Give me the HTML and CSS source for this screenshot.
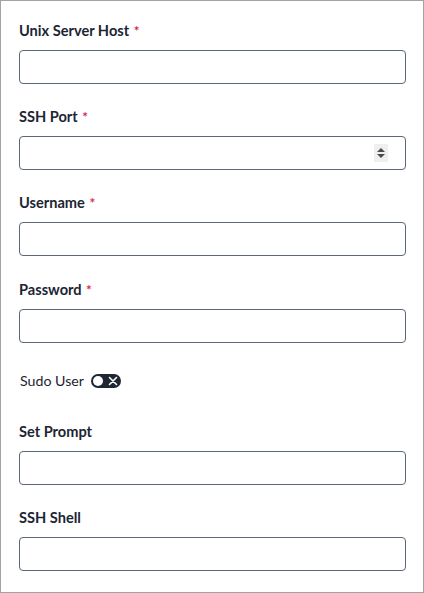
FILE: index.html
```html
<!DOCTYPE html>
<html>
<head>
<meta charset="utf-8">
<link rel="stylesheet" href="styles.css">
</head>
<body>
<div class="frame">
  <form class="form">
    <div class="field">
      <label class="label">Unix Server Host <span class="req">*</span></label>
      <input class="input" type="text">
    </div>
    <div class="field">
      <label class="label">SSH Port <span class="req">*</span></label>
      <div class="input number">
        <span class="spin">
          <svg width="10" height="14" viewBox="0 0 10 14"><path d="M5 2 L9 6 H1 Z" fill="#4b4b4b"/><path d="M1 8 H9 L5 12 Z" fill="#4b4b4b"/></svg>
        </span>
      </div>
    </div>
    <div class="field field-wide">
      <label class="label">Username <span class="req">*</span></label>
      <input class="input" type="text">
    </div>
    <div class="field">
      <label class="label">Password <span class="req">*</span></label>
      <input class="input" type="password">
    </div>
    <div class="toggle-row">
      <span class="toggle-label">Sudo User</span>
      <span class="toggle">
        <span class="knob"></span>
        <svg class="x" width="10" height="10" viewBox="0 0 10 10"><path d="M1.5 1.5 L8.5 8.5 M8.5 1.5 L1.5 8.5" stroke="#fff" stroke-width="1.6" stroke-linecap="round"/></svg>
      </span>
    </div>
    <div class="field">
      <label class="label">Set Prompt</label>
      <input class="input" type="text">
    </div>
    <div class="field">
      <label class="label">SSH Shell</label>
      <input class="input" type="text">
    </div>
  </form>
</div>
</body>
</html>
```
FILE: styles.css
```css
html, body {
  margin: 0;
  padding: 0;
  background: #fff;
}
.frame {
  width: 424px;
  height: 593px;
  box-sizing: border-box;
  border: 1px solid #a3a3a3;
  padding: 20px 18px 0 18px;
  font-family: "Source Sans Pro", Lato, "Liberation Sans", sans-serif;
  color: #1c2533;
}
.form {
  display: flex;
  flex-direction: column;
}
.field {
  display: flex;
  flex-direction: column;
  gap: 10px;
  margin-bottom: 23px;
}
.field-wide {
  margin-bottom: 24px;
}
.label {
  display: block;
  height: 19px;
  font-weight: 700;
  font-size: 14.6px;
  line-height: 19px;
  color: #1c2533;
  white-space: nowrap;
}
.req {
  color: #d62b56;
  margin-left: 1px;
  font-size: 13.5px;
  line-height: 0;
}
.input {
  display: block;
  box-sizing: border-box;
  width: 387px;
  height: 34px;
  border: 1px solid #5b6676;
  border-radius: 4px;
  margin: 0;
  padding: 0 8px;
  background: #fff;
  font: inherit;
  outline: none;
}
.number {
  display: flex;
  align-items: center;
  justify-content: flex-end;
  padding-right: 17px;
}
.spin {
  display: flex;
  align-items: center;
  justify-content: center;
  width: 14px;
  height: 18px;
  background: #efefef;
}
.toggle-row {
  display: flex;
  align-items: center;
  gap: 7px;
  height: 20px;
  padding-left: 1px;
  margin-top: 5px;
  margin-bottom: 31px;
}
.toggle-label {
  font-size: 14.2px;
  line-height: 20px;
  color: #1c2533;
}
.toggle {
  display: flex;
  align-items: center;
  justify-content: space-between;
  box-sizing: border-box;
  width: 30px;
  height: 14px;
  border-radius: 7px;
  background: #1f2733;
  padding: 0 3px 0 2px;
}
.knob {
  width: 10px;
  height: 10px;
  border-radius: 50%;
  background: #fff;
}
```
